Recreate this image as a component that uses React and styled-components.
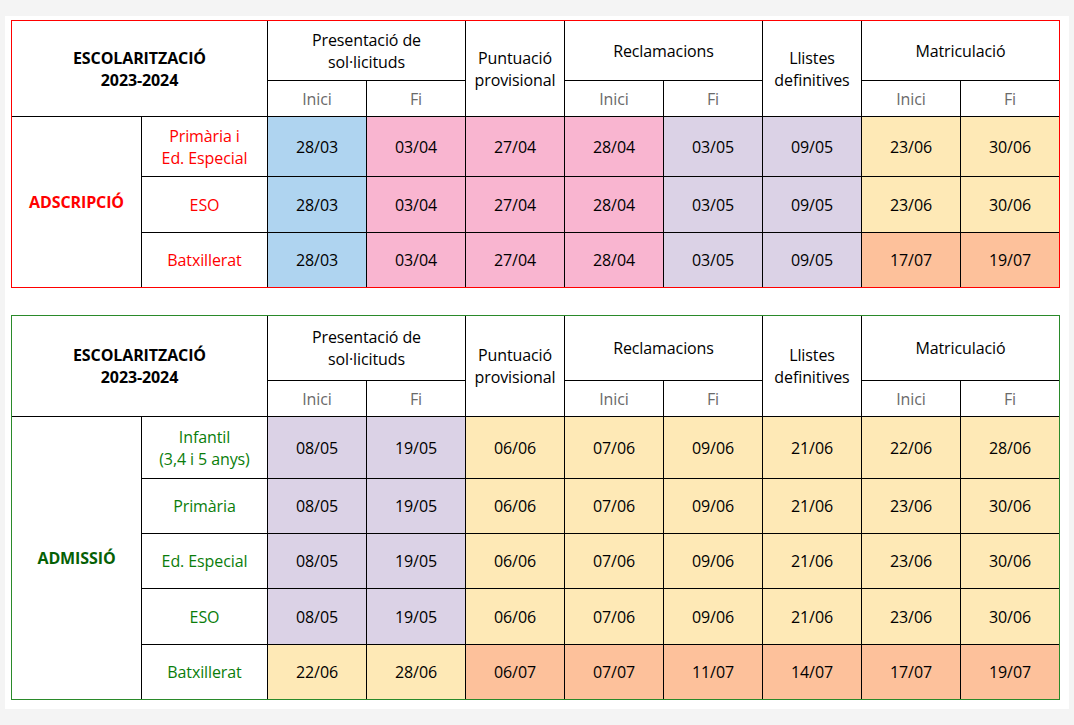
// Styles
import styled, { createGlobalStyle } from "styled-components";

const GlobalStyle = createGlobalStyle`
  html, body {
    margin: 0;
    padding: 0;
    background: #f4f4f4;
    font-family: "Open Sans", "Noto Sans", "Liberation Sans", sans-serif;
  }
`;

// palette for the date cells
const tones = {
  blue: "#afd4f0",
  pink: "#f9b5d0",
  lilac: "#dbd2e6",
  sand: "#fee9b6",
  peach: "#fdc19b",
};

const headers = [
  { label: ["Presentació de", "sol·licituds"], split: true },
  { label: ["Puntuació", "provisional"] },
  { label: ["Reclamacions"], split: true },
  { label: ["Llistes", "definitives"] },
  { label: ["Matriculació"], split: true },
];

const adscripcio = {
  title: "ADSCRIPCIÓ",
  accent: "#ff0000",
  strong: "#ff0000",
  rows: "59px 35px 59px 55px 54px",
  body: [
    {
      label: ["Primària i", "Ed. Especial"],
      cells: [
        ["28/03", "blue"], ["03/04", "pink"], ["27/04", "pink"], ["28/04", "pink"],
        ["03/05", "lilac"], ["09/05", "lilac"], ["23/06", "sand"], ["30/06", "sand"],
      ],
    },
    {
      label: ["ESO"],
      cells: [
        ["28/03", "blue"], ["03/04", "pink"], ["27/04", "pink"], ["28/04", "pink"],
        ["03/05", "lilac"], ["09/05", "lilac"], ["23/06", "sand"], ["30/06", "sand"],
      ],
    },
    {
      label: ["Batxillerat"],
      cells: [
        ["28/03", "blue"], ["03/04", "pink"], ["27/04", "pink"], ["28/04", "pink"],
        ["03/05", "lilac"], ["09/05", "lilac"], ["17/07", "peach"], ["19/07", "peach"],
      ],
    },
  ],
};

const sandRow = (first, last) => [
  ["08/05", "lilac"], ["19/05", "lilac"], ["06/06", "sand"], ["07/06", "sand"],
  ["09/06", "sand"], ["21/06", "sand"], [first, "sand"], [last, "sand"],
];

const admissio = {
  title: "ADMISSIÓ",
  accent: "#2a8a2a",
  text: "#0a7d0a",
  strong: "#056005",
  rows: "64px 35px 61px 54px 54px 55px 54px",
  body: [
    { label: ["Infantil", "(3,4 i 5 anys)"], cells: sandRow("22/06", "28/06") },
    { label: ["Primària"], cells: sandRow("23/06", "30/06") },
    { label: ["Ed. Especial"], cells: sandRow("23/06", "30/06") },
    { label: ["ESO"], cells: sandRow("23/06", "30/06") },
    {
      label: ["Batxillerat"],
      cells: [
        ["22/06", "sand"], ["28/06", "sand"], ["06/07", "peach"], ["07/07", "peach"],
        ["11/07", "peach"], ["14/07", "peach"], ["17/07", "peach"], ["19/07", "peach"],
      ],
    },
  ],
};

// 
const Panel = styled.div`
  margin: 16px 5px 17px 5px;
  padding: 4px 9px 9px 6px;
  background: #ffffff;
  display: flex;
  flex-direction: column;
  gap: 27px;
`;

const Grid = styled.div`
  display: grid;
  grid-template-columns: 129px 125px repeat(8, 98px);
  grid-template-rows: ${(p) => p.$rows};
  gap: 1px;
  background: #000000;
  border: 1px solid ${(p) => p.$accent};
  width: max-content;
`;

const Cell = styled.div`
  display: flex;
  flex-direction: column;
  align-items: center;
  justify-content: center;
  text-align: center;
  background: ${(p) => p.$bg || "#ffffff"};
  color: ${(p) => p.$color || "#000000"};
  font-size: 16px;
  line-height: 22px;
  font-weight: ${(p) => (p.$bold ? 700 : 500)};
  letter-spacing: -0.1px;
  grid-column: ${(p) => p.$col || "auto"};
  grid-row: ${(p) => p.$row || "auto"};
`;

const SubHead = styled(Cell)`
  color: #6a6a6a;
  font-weight: 400;
`;

const DateCell = styled(Cell)`
  font-weight: 500;
  color: #000000;
`;

export default function App() {
  return (
    <>
      <GlobalStyle />
      <Panel>
        <Calendar data={adscripcio} />
        <Calendar data={admissio} />
      </Panel>
    </>
  );
}

function Lines({ lines }) {
  return lines.map((line) => <span key={line}>{line}</span>);
}

function Calendar({ data }) {
  const bodyRows = data.body.length;

  return (
    <Grid $rows={data.rows} $accent={data.accent}>
      <Cell $col="1 / span 2" $row="1 / span 2" $bold>
        <span>ESCOLARITZACIÓ</span>
        <span>2023-2024</span>
      </Cell>

      {headers.map((h) =>
        h.split ? (
          <Cell key={h.label[0]} $col="span 2" $row="1">
            <Lines lines={h.label} />
          </Cell>
        ) : (
          <Cell key={h.label[0]} $row="1 / span 2">
            <Lines lines={h.label} />
          </Cell>
        )
      )}

      {headers
        .filter((h) => h.split)
        .flatMap((h, i) => [
          <SubHead key={"i" + i} $row="2">Inici</SubHead>,
          <SubHead key={"f" + i} $row="2">Fi</SubHead>,
        ])}

      <Cell $col="1" $row={`3 / span ${bodyRows}`} $color={data.strong} $bold>
        {data.title}
      </Cell>

      {data.body.map((row, r) => [
        <Cell key={"l" + r} $col="2" $row={3 + r} $color={data.text || data.accent}>
          <Lines lines={row.label} />
        </Cell>,
        ...row.cells.map(([date, tone], c) => (
          <DateCell key={r + "-" + c} $row={3 + r} $bg={tones[tone]}>
            {date}
          </DateCell>
        )),
      ])}
    </Grid>
  );
}
